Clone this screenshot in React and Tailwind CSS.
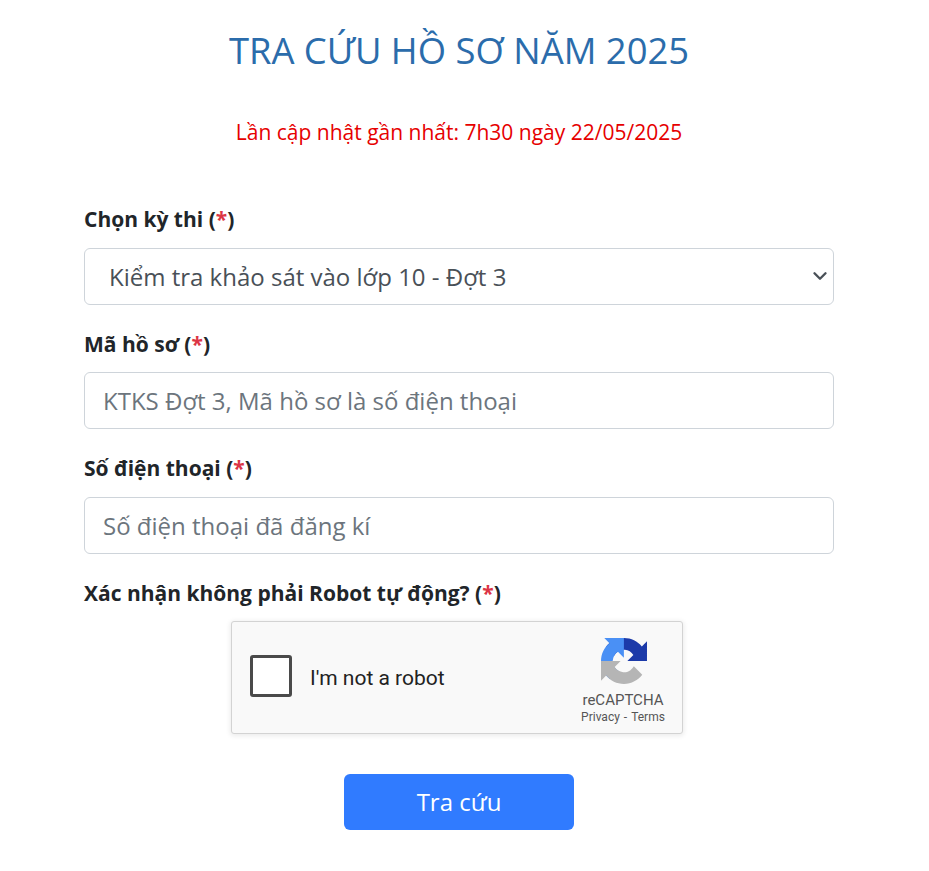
import { ChevronDown } from 'lucide-react';

const font = { fontFamily: '"Open Sans", sans-serif' };

function Label({ children, leading = 'leading-[28px]' }) {
  return (
    <label className={`block h-[30px] text-[21px] font-bold text-[#212529] mb-[13px] ${leading}`}>
      {children} (<span className="text-[#dc3545]">*</span>)
    </label>
  );
}

function RecaptchaLogo() {
  return (
    <svg viewBox="0 0 64 64" className="w-[46px] h-[46px] ml-[2px] mt-[1px]" aria-hidden="true">
      <path d="M64 31.955l-.033-1.37V4.687l-7.16 7.16C50.948 4.674 42.033.093 32.05.093c-10.4 0-19.622 4.96-25.458 12.64l11.736 11.86a15.55 15.55 0 0 1 4.754-5.334c2.05-1.6 4.952-2.906 8.968-2.906.485 0 .86.057 1.135.163 4.976.393 9.288 3.14 11.828 7.124l-8.307 8.307 26.295.008" fill="#1c3aa9" />
      <path d="M31.862.094l-1.37.033H4.594l7.16 7.16C4.58 13.147 0 22.06 0 32.046c0 10.4 4.96 19.622 12.64 25.458l11.86-11.736a15.55 15.55 0 0 1-5.334-4.754c-1.6-2.05-2.906-4.952-2.906-8.968 0-.485.057-.86.163-1.135.393-4.976 3.14-9.288 7.124-11.828l8.307 8.307.008-26.295" fill="#4a90f5" />
      <path d="M.001 32.045l.033 1.37v25.898l7.16-7.16c5.86 7.173 14.774 11.754 24.76 11.754 10.4 0 19.622-4.96 25.458-12.64l-11.736-11.86a15.55 15.55 0 0 1-4.754 5.334c-2.05 1.6-4.952 2.906-8.968 2.906-.485 0-.86-.057-1.135-.163-4.976-.393-9.288-3.14-11.828-7.124l8.307-8.307-26.295-.008" fill="#b5b5b5" />
    </svg>
  );
}

export default function App() {
  return (
    <div className="w-[918px] min-h-[871px] bg-white pt-[26px]" style={font}>
      <h1 className="text-center text-[36.4px] leading-[49px] text-[#2b6cab] font-normal">TRA CỨU HỒ SƠ NĂM 2025</h1>
      <p className="text-center text-[21px] leading-[30px] text-[#e60000] mt-[42px]">
        Lần cập nhật gần nhất: 7h30 ngày 22/05/2025
      </p>
      <form className="w-[750px] mx-auto mt-[58px]">
        <Label>Chọn kỳ thi</Label>
        <div className="relative mb-[24px]">
          <select className="block w-full h-[57px] pl-[24px] pr-[40px] appearance-none text-[24px] text-[#495057] bg-white border border-[#ced4da] rounded-[6px]">
            <option>Kiểm tra khảo sát vào lớp 10 - Đợt 3</option>
          </select>
          <ChevronDown className="absolute right-[3px] top-[17px] w-[22px] h-[22px] text-[#495057] pointer-events-none" strokeWidth={2.6} />
        </div>
        <Label leading="leading-[30px]">Mã hồ sơ</Label>
        <input
          className="block w-full h-[57px] px-[18px] text-[24px] text-[#495057] placeholder:text-[#6c757d] bg-white border border-[#ced4da] rounded-[6px] mb-[25px]"
          placeholder="KTKS Đợt 3, Mã hồ sơ là số điện thoại"
        />
        <Label>Số điện thoại</Label>
        <input
          className="block w-full h-[57px] px-[18px] text-[24px] text-[#495057] placeholder:text-[#6c757d] bg-white border border-[#ced4da] rounded-[6px] mb-[25px]"
          placeholder="Số điện thoại đã đăng kí"
        />
        <Label>Xác nhận không phải Robot tự động?</Label>
        <div className="w-[452px] ml-[147px] -mt-[1px]">
          <div
            className="h-[113px] flex items-center bg-[#f9f9f9] border border-[#d3d3d3] rounded-[3px] shadow-[0_1px_5px_1px_rgba(0,0,0,0.08)]"
            style={{ fontFamily: 'Roboto, sans-serif' }}
          >
            <div className="w-[42px] h-[42px] ml-[18px] mb-[4px] bg-white border-[3px] border-[#4a4a4a] rounded-[3px]" />
            <span className="ml-[18px] mt-[2px] text-[21px] text-[#222]">I'm not a robot</span>
            <div className="ml-auto w-[100px] mr-[9px] mt-[6px] flex flex-col items-center">
              <RecaptchaLogo />
              <span className="text-[15px] leading-[18px] text-[#555] mt-[7px]">reCAPTCHA</span>
              <span className="flex gap-[4px] text-[12px] leading-[14px] text-[#555] mt-[1px]">
                <span>Privacy</span>
                <span>-</span>
                <span>Terms</span>
              </span>
            </div>
          </div>
        </div>
        <div className="flex justify-center mt-[40px]">
          <button type="button" className="w-[230px] h-[56px] bg-[#307bff] text-white text-[24px] rounded-[6px]">
            Tra cứu
          </button>
        </div>
      </form>
    </div>
  );
}
